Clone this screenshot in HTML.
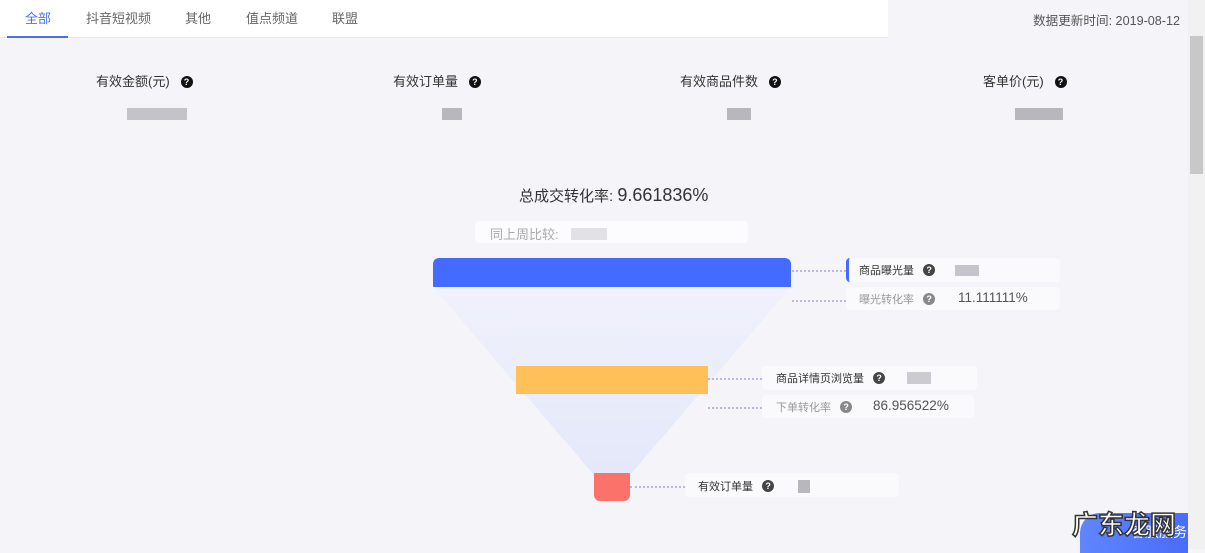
<!DOCTYPE html>
<html><head><meta charset="utf-8"><style>
*{margin:0;padding:0;box-sizing:border-box}
body{width:1205px;height:549px;overflow:hidden;background:#f5f5f9;font-family:"Liberation Sans","Noto Sans CJK SC",sans-serif;position:relative;font-size:13px;color:#333}
.a{position:absolute}
.tabs{left:0;top:0;width:888px;height:38px;background:#fff;border-bottom:1px solid #e8e8ee}
.tab{top:8px;font-size:13px;color:#666}
.q{display:inline-block;width:12px;height:12px;border-radius:50%;background:#111;color:#fff;font-size:9px;line-height:12px;text-align:center;font-weight:bold;vertical-align:1px}
.qg{background:#888}
.qd{background:#444}
.blur{background:#b8b7bd}
.box{background:#fafafd;border-radius:4px}
.dot{border-top:2px dotted #b9b9e0;height:0}
</style></head><body>
<div class="a tabs"></div>
<div class="a tab" style="left:25px;color:#4a6cf7">全部</div>
<div class="a" style="left:7px;top:36px;width:61px;height:2px;background:#4a6cf7"></div>
<div class="a tab" style="left:86px">抖音短视频</div>
<div class="a tab" style="left:185px">其他</div>
<div class="a tab" style="left:246px">值点频道</div>
<div class="a tab" style="left:332px">联盟</div>
<div class="a" style="left:1033px;top:10px;font-size:12.6px;color:#555">数据更新时间: 2019-08-12</div>
<div class="a" style="left:1188px;top:0;width:17px;height:549px;background:#f1f1f1"></div>
<div class="a" style="left:1190px;top:36px;width:13px;height:138px;background:#c8c8c8"></div>

<div class="a" style="left:96px;top:71px">有效金额(元) &nbsp;&nbsp;<span class="q">?</span></div>
<div class="a blur" style="left:127px;top:108px;width:60px;height:12px;opacity:.8"></div>
<div class="a" style="left:393px;top:71px">有效订单量 &nbsp;&nbsp;<span class="q">?</span></div>
<div class="a blur" style="left:442px;top:108px;width:20px;height:12px"></div>
<div class="a" style="left:680px;top:71px">有效商品件数 &nbsp;&nbsp;<span class="q">?</span></div>
<div class="a blur" style="left:727px;top:108px;width:24px;height:12px"></div>
<div class="a" style="left:983px;top:71px">客单价(元) &nbsp;&nbsp;<span class="q">?</span></div>
<div class="a blur" style="left:1015px;top:108px;width:48px;height:12px"></div>

<div class="a" style="left:519px;top:185px;font-size:15px">总成交转化率: <span style="font-size:18px">9.661836%</span></div>
<div class="a box" style="left:475px;top:221px;width:273px;height:22px;background:#fcfcff"></div>
<div class="a" style="left:490px;top:224px;color:#aaa">同上周比较:</div>
<div class="a" style="left:571px;top:228px;width:36px;height:12px;background:#e2e2e6"></div>

<svg class="a" style="left:0;top:0" width="1205" height="549">
<defs><linearGradient id="g" x1="0" y1="0" x2="0" y2="1"><stop offset="0" stop-color="#f0f1fb"/><stop offset="1" stop-color="#e4e8fa"/></linearGradient></defs>
<polygon points="433,287 791,287 630,475 594,475" fill="url(#g)"/>
<path d="M433,287V264a6,6 0 0 1 6-6H785a6,6 0 0 1 6,6V287Z" fill="#436cff"/>
<rect x="516" y="366" width="192" height="28" fill="#ffbf59"/>
<path d="M594,473H630V495a6,6 0 0 1-6,6H600a6,6 0 0 1-6-6Z" fill="#fb726a"/>
</svg>

<div class="a dot" style="left:792px;top:270px;width:54px"></div>
<div class="a box" style="left:846px;top:258px;width:214px;height:24px;border-left:3px solid #436cff"></div>
<div class="a" style="left:859px;top:262px;font-size:11px">商品曝光量 &nbsp;&nbsp;<span class="q qd">?</span></div>
<div class="a blur" style="left:955px;top:265px;width:24px;height:11px;opacity:.8"></div>
<div class="a dot" style="left:792px;top:300px;width:54px"></div>
<div class="a box" style="left:846px;top:287px;width:214px;height:23px"></div>
<div class="a" style="left:859px;top:291px;font-size:11px;color:#999">曝光转化率 &nbsp;&nbsp;<span class="q qg">?</span></div>
<div class="a" style="left:958px;top:290px;font-size:13.5px;color:#555">11.111111%</div>

<div class="a dot" style="left:708px;top:378px;width:54px"></div>
<div class="a box" style="left:762px;top:366px;width:215px;height:24px"></div>
<div class="a" style="left:776px;top:370px;font-size:11px">商品详情页浏览量 &nbsp;&nbsp;<span class="q qd">?</span></div>
<div class="a blur" style="left:907px;top:372px;width:24px;height:12px;opacity:.7"></div>
<div class="a dot" style="left:708px;top:407px;width:54px"></div>
<div class="a box" style="left:762px;top:395px;width:212px;height:23px"></div>
<div class="a" style="left:776px;top:399px;font-size:11px;color:#999">下单转化率 &nbsp;&nbsp;<span class="q qg">?</span></div>
<div class="a" style="left:873px;top:398px;font-size:13.5px;color:#555">86.956522%</div>

<div class="a dot" style="left:630px;top:486px;width:55px"></div>
<div class="a box" style="left:685px;top:473px;width:214px;height:24px"></div>
<div class="a" style="left:698px;top:478px;font-size:11px">有效订单量 &nbsp;&nbsp;<span class="q qd">?</span></div>
<div class="a blur" style="left:798px;top:480px;width:12px;height:13px"></div>

<div class="a" style="left:1080px;top:513px;width:108px;height:40px;background:linear-gradient(90deg,#5f86ff,#4a6cf7);border-radius:20px 0 0 0"></div>
<div class="a" style="left:1131px;top:522px;color:#fff;font-size:14px">客服服务</div>
<div class="a" style="left:1072px;top:505px;font-size:26px;font-weight:bold;color:#fff;-webkit-text-stroke:1.5px #333">广东龙网</div>
</body></html>
